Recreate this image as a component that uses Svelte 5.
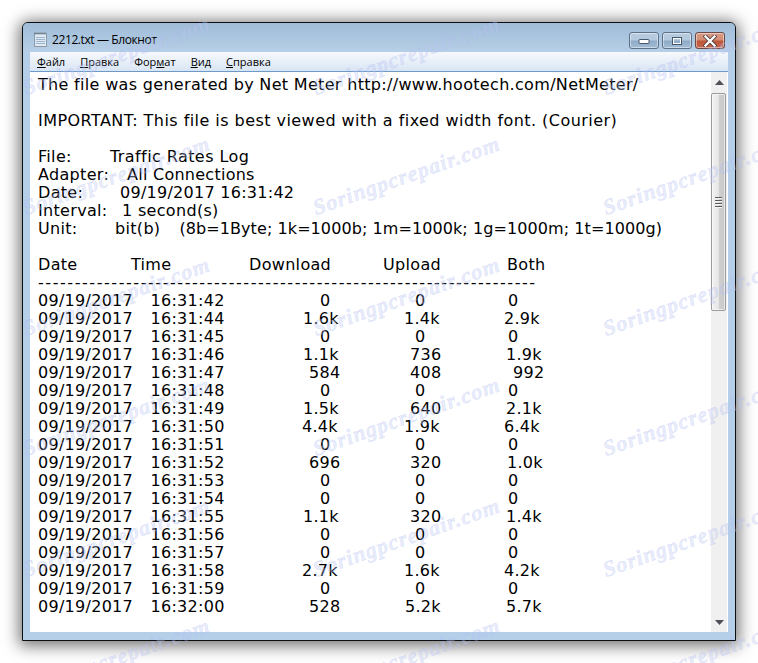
<script>
  const menus = [
    { pre: '', key: 'Ф', post: 'айл' },
    { pre: '', key: 'П', post: 'равка' },
    { pre: 'Фор', key: 'м', post: 'ат' },
    { pre: '', key: 'В', post: 'ид' },
    { pre: '', key: 'С', post: 'правка' }
  ];
  const meta = [
    ['File:', 72, [['Traffic Rates Log', 0, 0.42]]],
    ['Adapter:', 89, [['All Connections', 0, 0.26]]],
    ['Date:', 82, [['09/19/2017 16:31:42', 0, 0.27]]],
    ['Interval:', 84, [['1 second(s)', 0, 0.32]]],
    ['Unit:', 77, [['bit(b)', 0, 0.32], ['(8b=1Byte; 1k=1000b; 1m=1000k; 1g=1000m; 1t=1000g)', 19, 0.08]]]
  ];
  const rows = [
    ['16:31:42', '0', 320, '0', 415, '0', 508],
    ['16:31:44', '1.6k', 303, '1.4k', 404, '2.9k', 504],
    ['16:31:45', '0', 320, '0', 415, '0', 508],
    ['16:31:46', '1.1k', 303, '736', 410, '1.9k', 506],
    ['16:31:47', '584', 309, '408', 410, '992', 513],
    ['16:31:48', '0', 320, '0', 415, '0', 508],
    ['16:31:49', '1.5k', 303, '640', 410, '2.1k', 506],
    ['16:31:50', '4.4k', 302, '1.9k', 404, '6.4k', 504],
    ['16:31:51', '0', 320, '0', 415, '0', 508],
    ['16:31:52', '696', 309, '320', 410, '1.0k', 507],
    ['16:31:53', '0', 320, '0', 415, '0', 508],
    ['16:31:54', '0', 320, '0', 415, '0', 508],
    ['16:31:55', '1.1k', 303, '320', 410, '1.4k', 506],
    ['16:31:56', '0', 320, '0', 415, '0', 508],
    ['16:31:57', '0', 320, '0', 415, '0', 508],
    ['16:31:58', '2.7k', 302, '1.6k', 404, '4.2k', 504],
    ['16:31:59', '0', 320, '0', 415, '0', 508],
    ['16:32:00', '528', 309, '5.2k', 405, '5.7k', 506]
  ];
  const marks = Array.from({ length: 18 }, (_, i) => i);
  const dashes = '-'.repeat(68);
</script>

<div class="stage">
  <div class="window">
    <div class="titlebar">
      <svg class="appicon" width="15" height="16" viewBox="0 0 15 16">
        <rect x="1.5" y="2.5" width="12" height="13" fill="#dfe9f3" stroke="#8d9aa8" />
        <path d="M3 6.5h9M3 8.5h9M3 10.5h9M3 12.5h9" stroke="#9db6d0" />
        <path d="M2 1.5v2M4 1.5v2M6 1.5v2M8 1.5v2M10 1.5v2M12 1.5v2" stroke="#5f6c78" />
      </svg>
      <span class="title">2212.txt — Блокнот</span>
      <div class="controls">
        <div class="ctl">
          <svg width="14" height="8" viewBox="0 0 14 8"><rect x="2" y="2.5" width="10" height="4" rx="0.5" fill="#fff" stroke="#46586c" /></svg>
        </div>
        <div class="ctl">
          <svg width="12" height="10" viewBox="0 0 12 10"><rect x="1.5" y="1.5" width="9" height="7" fill="none" stroke="#46586c" /><rect x="2.5" y="2.5" width="7" height="5" fill="none" stroke="#fff" /></svg>
        </div>
        <div class="ctl close">
          <svg width="14" height="12" viewBox="0 0 14 12"><path d="M2.5 1.5L11.5 10.5M11.5 1.5L2.5 10.5" stroke="#4b3a38" stroke-width="4" stroke-linecap="square" /><path d="M2.5 1.5L11.5 10.5M11.5 1.5L2.5 10.5" stroke="#fff" stroke-width="2.4" stroke-linecap="square" /></svg>
        </div>
      </div>
    </div>
    <div class="client">
      <div class="menubar">
        {#each menus as m}
          <span class="menu">{m.pre}<u>{m.key}</u>{m.post}</span>
        {/each}
      </div>
      <div class="body">
        <div class="text">
          <div class="line">The file was generated by Net Meter http://www.hootech.com/NetMeter/</div>
          <div class="line"></div>
          <div class="line important">IMPORTANT: This file is best viewed with a fixed width font. (Courier)</div>
          <div class="line"></div>
          {#each meta as [label, gap, values]}
            <div class="line metaline">
              <span class="label" style="width:{gap}px">{label}</span>
              {#each values as [value, offset, track]}
                <span style="margin-left:{offset}px;letter-spacing:{track}px">{value}</span>
              {/each}
            </div>
          {/each}
          <div class="line"></div>
          <div class="line head">
            <span>Date</span><span>Time</span><span>Download</span><span>Upload</span><span>Both</span>
          </div>
          <div class="line dash">{dashes}</div>
          {#each rows as r}
            <div class="line row">
              <span>09/19/2017</span>
              <span>{r[0]}</span>
              <span style="padding-left:{r[2] - 300}px">{r[1]}</span>
              <span style="padding-left:{r[4] - 400}px">{r[3]}</span>
              <span style="padding-left:{r[6] - 500}px">{r[5]}</span>
            </div>
          {/each}
        </div>
        <div class="scrollbar">
          <svg class="arrow" width="9" height="5" viewBox="0 0 9 5"><path d="M4.5 0L9 5H0z" fill="#4d5157" /></svg>
          <div class="thumb">
            <div class="grip"><i></i><i></i><i></i><i></i></div>
          </div>
          <div class="track"></div>
          <svg class="arrow" width="9" height="5" viewBox="0 0 9 5"><path d="M0 0H9L4.5 5z" fill="#4d5157" /></svg>
        </div>
      </div>
    </div>
  </div>
  <div class="marks">
    {#each marks as i (i)}
      <div class="cell"><span class="mark">Soringpcrepair.com</span></div>
    {/each}
  </div>
</div>

<style>
  :global(body) {
    margin: 0;
    background: #fff;
  }
  .stage {
    position: relative;
    width: 758px;
    height: 663px;
    overflow: hidden;
    padding: 22px 0 0 22px;
    box-sizing: border-box;
    background: #fff;
  }
  .window {
    width: 714px;
    height: 619px;
    box-sizing: border-box;
    border: 1px solid #0b0f12;
    border-radius: 6px 6px 0 0;
    background: #b5cfe9;
    box-shadow: 0 2px 16px 3px rgba(0, 0, 0, 0.55);
    display: flex;
    flex-direction: column;
    padding: 0 7px 8px 7px;
  }
  .titlebar {
    height: 29px;
    flex: none;
    margin: 0 -7px;
    padding: 0 10px 0 10px;
    border-radius: 5px 5px 0 0;
    background: linear-gradient(#9fbcd8, #b7cfe6);
    display: flex;
    align-items: center;
    font: 12px "Open Sans", "Noto Sans", sans-serif;
    color: #000;
    box-sizing: border-box;
  }
  .appicon {
    flex: none;
    margin-top: 3px;
  }
  .title {
    margin-left: 4px;
    margin-top: 4px;
    flex: 1;
    letter-spacing: -0.4px;
  }
  .controls {
    display: flex;
    gap: 3px;
    margin-top: 1px;
    align-self: flex-start;
    padding-top: 8px;
  }
  .ctl {
    width: 30px;
    height: 17px;
    box-sizing: border-box;
    border: 1px solid #5c7087;
    border-radius: 3px;
    background: linear-gradient(#b9cde0 0%, #b2c8dc 48%, #8faac5 52%, #a2bcd5 100%);
    box-shadow: inset 0 0 0 1px rgba(255, 255, 255, 0.45);
    display: flex;
    align-items: center;
    justify-content: center;
  }
  .close {
    border-color: #6b4a46;
    background: linear-gradient(#d89a84 0%, #d38c74 48%, #bd5638 52%, #c8674a 100%);
  }
  .client {
    flex: 1;
    min-height: 0;
    display: flex;
    flex-direction: column;
    background: #fff;
  }
  .menubar {
    height: 20px;
    flex: none;
    box-sizing: border-box;
    border-bottom: 1px solid #6d9ac9;
    background: linear-gradient(#f7f9fd, #d9e5f4);
    display: flex;
    align-items: center;
    font: 11px "Open Sans", "Noto Sans", sans-serif;
    color: #000;
    padding-left: 7px;
    gap: 15px;
  }
  .body {
    flex: 1;
    min-height: 0;
    display: flex;
    background: #fff;
  }
  .text {
    flex: 1;
    padding: 4px 0 0 8px;
    font: 16px/18px "DejaVu Sans", Verdana, sans-serif;
    color: #000;
    overflow: hidden;
    letter-spacing: 0.32px;
  }
  .line {
    height: 18px;
    white-space: nowrap;
  }
  .important {
    letter-spacing: 0.45px;
  }
  .metaline {
    display: flex;
  }
  .label {
    flex: none;
  }
  .head,
  .row {
    display: grid;
  }
  .head {
    grid-template-columns: 93px 118px 134px 124px auto;
  }
  .row {
    grid-template-columns: 112.5px 149.5px 100px 100px auto;
    letter-spacing: 0.28px;
  }
  .dash {
    letter-spacing: 1.56px;
  }
  .scrollbar {
    width: 17px;
    flex: none;
    box-sizing: border-box;
    background: #f0f0f0;
    border-right: 1px solid #fff;
    display: flex;
    flex-direction: column;
    align-items: center;
    padding: 8px 0 7px;
  }
  .arrow {
    flex: none;
  }
  .thumb {
    width: 15px;
    height: 218px;
    flex: none;
    margin: 8px 1px 0 0;
    box-sizing: border-box;
    border: 1px solid #9b9b9b;
    border-radius: 2px;
    background: linear-gradient(90deg, #f2f2f2 0%, #e6e6e6 50%, #cfcfcf 55%, #c6c6c6 100%);
    box-shadow: inset 0 0 0 1px rgba(255, 255, 255, 0.6);
    display: flex;
    align-items: center;
    justify-content: center;
  }
  .grip {
    display: flex;
    flex-direction: column;
    gap: 1px;
  }
  .grip i {
    display: block;
    width: 7px;
    height: 1px;
    background: #5a5a5a;
    border-bottom: 1px solid #f4f4f4;
  }
  .track {
    flex: 1;
  }
  .marks {
    position: absolute;
    left: 25px;
    top: 0;
    display: grid;
    grid-template-columns: repeat(3, 290px);
    grid-auto-rows: 120.4px;
    pointer-events: none;
  }
  .cell {
    position: relative;
    height: 120px;
    white-space: nowrap;
  }
  .mark {
    display: block;
    width: max-content;
    transform-origin: 0 100%;
    transform: translate(3px, 75px) rotate(-19.5deg);
    font: italic bold 22px "Liberation Serif", serif;
    letter-spacing: 1px;
    color: rgba(190, 200, 245, 0.36);
    -webkit-text-stroke: 0.4px rgba(150, 165, 235, 0.3);
  }
</style>
